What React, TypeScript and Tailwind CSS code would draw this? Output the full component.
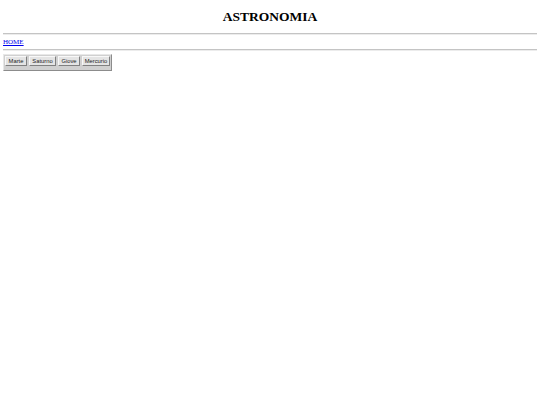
import React from 'react';

const planets = [
  { name: 'Marte', w: 'w-[22px]' },
  { name: 'Saturno', w: 'w-[27px]' },
  { name: 'Giove', w: 'w-[22px]' },
  { name: 'Mercurio', w: 'w-[28px]' },
];

export default function App() {
  return (
    <div className="w-[540px] h-[405px] bg-white px-[3px] text-black" style={{ fontFamily: '"Liberation Serif", serif' }}>
      <h1 className="pt-[9px] text-center text-[13.5px] font-bold leading-[15px]">ASTRONOMIA</h1>
      <hr className="mt-[9px] border-t border-b border-t-[#c4c4c4] border-b-[#ececec]" />
      <div className="pt-[3px] pb-[3px] text-[7px] leading-[8px]">
        <a href="#" className="text-[#0000ee] underline">HOME</a>
      </div>
      <hr className="border-t border-b border-t-[#c4c4c4] border-b-[#ececec]" />
      <div className="mt-[3px] flex w-fit flex-col bg-[#d0d0d0] border border-t-[#e8e8e8] border-l-[#e8e8e8] border-r-[#8c8c8c] border-b-[#8c8c8c] px-[1px] pt-[1px] pb-[4px]">
        <div className="flex gap-[2px]">
          {planets.map(p => (
            <button
              key={p.name}
              className={`${p.w} h-[10px] p-0 bg-[#e4e4e4] border border-t-[#f8f8f8] border-l-[#f8f8f8] border-r-[#808080] border-b-[#808080] text-[5.8px] leading-[8px] text-[#222] text-center`}
              style={{ fontFamily: '"Liberation Sans", Arial, sans-serif' }}
            >
              {p.name}
            </button>
          ))}
        </div>
      </div>
    </div>
  );
}
